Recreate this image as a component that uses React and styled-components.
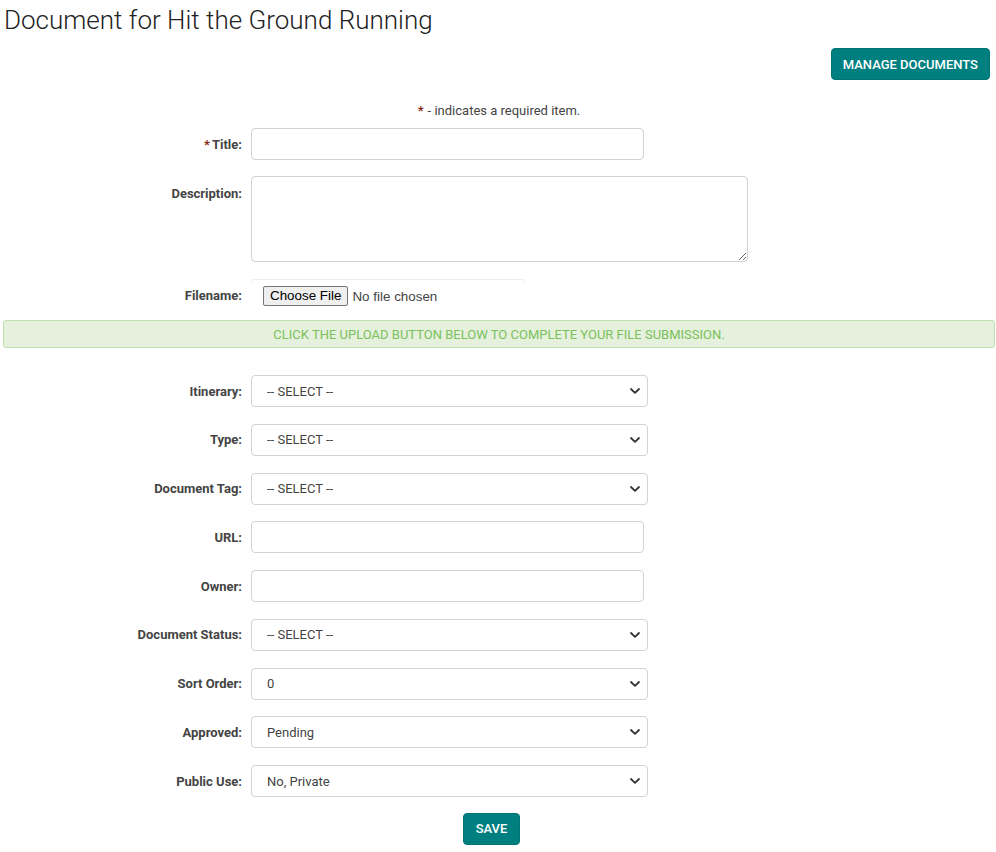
import React from "react";
import styled, { createGlobalStyle } from "styled-components";

const GlobalStyle = createGlobalStyle`
  * { box-sizing: border-box; }
  body {
    margin: 0;
    background: #fff;
    font-family: Roboto, "Open Sans", Arial, sans-serif;
    color: #444;
  }
`;

const Page = styled.div`
  padding: 0 1px 0 3px;
`;

const PageTitle = styled.h1`
  margin: 0;
  padding: 5px 0 0 1px;
  font-size: 26px;
  line-height: 30px;
  font-weight: 300;
  color: #222;
`;

const Toolbar = styled.div`
  display: flex;
  justify-content: flex-end;
  padding: 13px 5px 0 0;
`;

const TealButton = styled.button`
  background: #007f80;
  color: #fff;
  border: 1px solid #007375;
  border-radius: 4px;
  font-family: Roboto, Arial, sans-serif;
  font-size: 13px;
  font-weight: 500;
  text-transform: uppercase;
  height: 32px;
  padding: 0 ${(p) => (p.$wide ? "11px" : "12px")};
  cursor: pointer;
`;

const RequiredNote = styled.p`
  margin: 22px 0 0;
  text-align: center;
  font-size: 13px;
  line-height: 17px;
  color: #444;
`;

const Star = styled.span`
  color: #8b2a14;
  font-weight: 700;
  margin-right: ${(p) => p.$gap || "4px"};
`;

const Form = styled.form`
  display: flex;
  flex-direction: column;
  margin-top: 9px;
`;

const Row = styled.div`
  display: grid;
  grid-template-columns: 239px 1fr;
  column-gap: 9px;
  align-items: ${(p) => (p.$top ? "start" : "center")};
  margin-bottom: ${(p) => p.$gap || "16.75px"};
`;

const Label = styled.label`
  text-align: right;
  font-size: 13px;
  font-weight: 700;
  color: #444;
  padding-top: ${(p) => (p.$top ? "10px" : "0")};
`;

const TextInput = styled.input`
  width: 393px;
  height: 32px;
  border: 1px solid #d3d3d3;
  border-radius: 4px;
  padding: 0 12px;
  font-family: Roboto, Arial, sans-serif;
  font-size: 13px;
  color: #444;
  outline: none;
`;

const TextArea = styled.textarea`
  display: block;
  width: 497px;
  height: 86px;
  border: 1px solid #d3d3d3;
  border-radius: 4px;
  padding: 8px 12px;
  font-family: Roboto, Arial, sans-serif;
  font-size: 13px;
  resize: both;
  outline: none;
`;

const FileBox = styled.div`
  width: 274px;
  height: 32px;
  border-top: 1px solid #ececec;
  border-radius: 4px;
  padding: 5px 12px 0;
`;

const FileInput = styled.input`
  font-family: "Liberation Sans", Arial, sans-serif;
  font-size: 13.4px;
  color: #444;

  &::file-selector-button {
    font-family: "Liberation Sans", Arial, sans-serif;
    font-size: 13.4px;
    color: #000;
    background: #efefef;
    border: 1px solid #767676;
    border-radius: 2px;
    height: 20px;
    padding: 0 6px;
    margin-right: 4px;
  }
`;

const Alert = styled.div`
  height: 28px;
  margin-bottom: 27px;
  background: #e5f1dc;
  border: 1px solid #bfe0ab;
  border-radius: 3px;
  display: flex;
  align-items: center;
  justify-content: center;
  font-size: 13px;
  text-transform: uppercase;
  color: #7cc05c;
`;

const SelectWrap = styled.div`
  position: relative;
  width: 397px;
`;

const Select = styled.select`
  width: 100%;
  height: 32px;
  appearance: none;
  border: 1px solid #d3d3d3;
  border-radius: 4px;
  background: #fff;
  padding: 0 30px 0 15px;
  font-family: Roboto, Arial, sans-serif;
  font-size: 13px;
  color: #444;
  outline: none;
`;

const Chevron = styled.svg`
  position: absolute;
  right: 8px;
  top: 13px;
  pointer-events: none;
`;

const SaveRow = styled.div`
  display: flex;
  justify-content: center;
  padding-right: 15px;
  margin-top: -1px;
  padding-bottom: 8px;
`;

const Dropdown = ({ id, options }) => (
  <SelectWrap>
    <Select id={id} defaultValue={options[0]}>
      {options.map((o) => (
        <option key={o}>{o}</option>
      ))}
    </Select>
    <Chevron width="10" height="6" viewBox="0 0 10 6">
      <path
        d="M1 1 L5 4.8 L9 1"
        fill="none"
        stroke="#333"
        strokeWidth="1.8"
        strokeLinecap="round"
        strokeLinejoin="round"
      />
    </Chevron>
  </SelectWrap>
);

const SELECT = ["-- SELECT --"];

export default function App() {
  return (
    <>
      <GlobalStyle />
      <Page>
        <PageTitle>Document for Hit the Ground Running</PageTitle>
        <Toolbar>
          <TealButton type="button" $wide>
            Manage Documents
          </TealButton>
        </Toolbar>
        <RequiredNote>
          <Star>*</Star>- indicates a required item.
        </RequiredNote>

        <Form onSubmit={(e) => e.preventDefault()}>
          <Row $gap="16px">
            <Label htmlFor="title">
              <Star $gap="2px">*</Star>Title:
            </Label>
            <TextInput id="title" />
          </Row>
          <Row $top $gap="17px">
            <Label htmlFor="description" $top>
              Description:
            </Label>
            <TextArea id="description" />
          </Row>
          <Row $gap="9px">
            <Label htmlFor="filename">Filename:</Label>
            <FileBox>
              <FileInput id="filename" type="file" />
            </FileBox>
          </Row>

          <Alert>Click the upload button below to complete your file submission.</Alert>

          <Row>
            <Label htmlFor="itinerary">Itinerary:</Label>
            <Dropdown id="itinerary" options={SELECT} />
          </Row>
          <Row>
            <Label htmlFor="type">Type:</Label>
            <Dropdown id="type" options={SELECT} />
          </Row>
          <Row>
            <Label htmlFor="tag">Document Tag:</Label>
            <Dropdown id="tag" options={SELECT} />
          </Row>
          <Row>
            <Label htmlFor="url">URL:</Label>
            <TextInput id="url" />
          </Row>
          <Row>
            <Label htmlFor="owner">Owner:</Label>
            <TextInput id="owner" />
          </Row>
          <Row>
            <Label htmlFor="status">Document Status:</Label>
            <Dropdown id="status" options={SELECT} />
          </Row>
          <Row>
            <Label htmlFor="sort">Sort Order:</Label>
            <Dropdown id="sort" options={["0", "1", "2", "3", "4", "5"]} />
          </Row>
          <Row>
            <Label htmlFor="approved">Approved:</Label>
            <Dropdown id="approved" options={["Pending", "Approved", "Denied"]} />
          </Row>
          <Row>
            <Label htmlFor="public">Public Use:</Label>
            <Dropdown id="public" options={["No, Private", "Yes, Public"]} />
          </Row>

          <SaveRow>
            <TealButton type="submit">Save</TealButton>
          </SaveRow>
        </Form>
      </Page>
    </>
  );
}
